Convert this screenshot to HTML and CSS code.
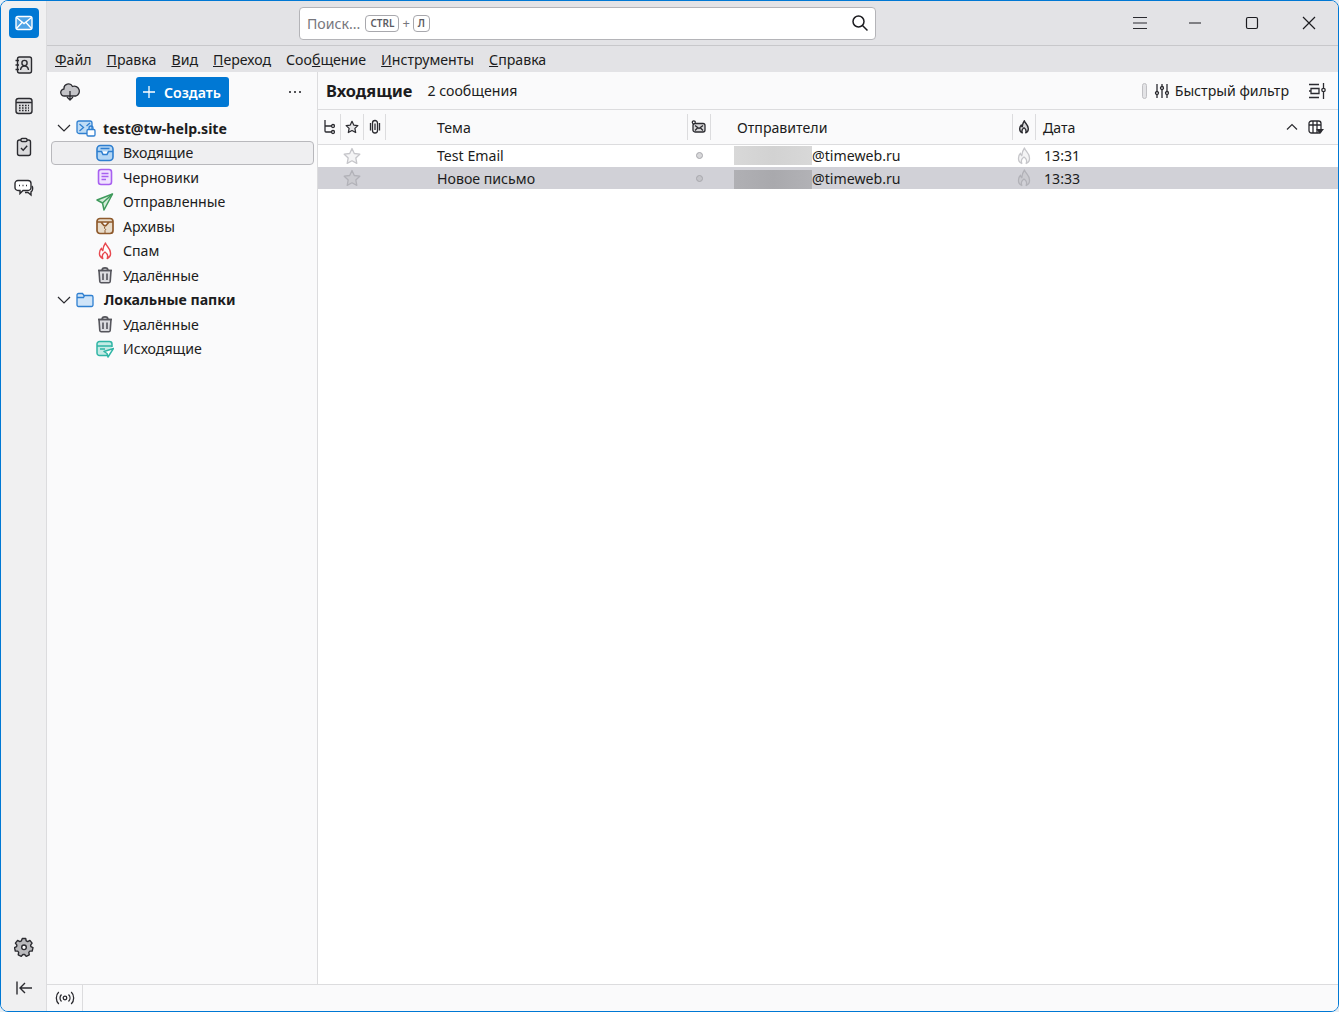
FILE: index.html
```html
<!DOCTYPE html>
<html lang="ru">
<head>
  <meta charset="UTF-8" />
  <title>Входящие - test@tw-help.site</title>
  <link rel="stylesheet" href="styles.css">
</head>
<body>
  <div class="window">

    <!-- Spaces toolbar -->
    <div class="spaces">
      <div class="space-btn space-active">
        <svg width="20" height="20" viewBox="0 0 20 20" fill="none" stroke="#fff" stroke-width="1.4"><rect x="2" y="3.500" width="16" height="13" rx="2" fill="#4da3e6"/><path d="M2.500 4.500 10 10.500l7.500-6M2.500 15.500 8 9.500M17.500 15.500 12 9.500"/></svg>
      </div>
      <div class="space-btn">
        <svg width="20" height="20" viewBox="0 0 20 20" fill="#dcdcde" stroke="#2b2b30" stroke-width="1.4"><rect x="3.500" y="2" width="14" height="16" rx="2"/><circle cx="10.500" cy="8" r="2.600" fill="none"/><path d="M6.500 15c.4-3 2-4 4-4s3.600 1 4 4" fill="none"/><path d="M1.500 5.500h3.500M1.500 10h3.500M1.500 14.500h3.500"/></svg>
      </div>
      <div class="space-btn">
        <svg width="20" height="20" viewBox="0 0 20 20" fill="#dcdcde" stroke="#2b2b30" stroke-width="1.4"><rect x="2" y="2.500" width="16" height="15" rx="2.500"/><path d="M2 6.500h16" /><path d="M5 9.500h10M5 12h10M5 14.500h10" stroke-dasharray="1.600 1.400" stroke-width="1.500"/></svg>
      </div>
      <div class="space-btn">
        <svg width="20" height="20" viewBox="0 0 20 20" fill="#dcdcde" stroke="#2b2b30" stroke-width="1.4"><rect x="3.500" y="3" width="13" height="15.500" rx="2"/><rect x="7" y="1.500" width="6" height="3" rx="1" fill="#fff"/><path d="m7 11 2.200 2.200L13.200 8.800" fill="none"/></svg>
      </div>
      <div class="space-btn">
        <svg width="20" height="20" viewBox="0 0 20 20" fill="#dcdcde" stroke="#2b2b30" stroke-width="1.4"><path d="M4 2.500h10a3 3 0 0 1 3 3v4a3 3 0 0 1-3 3H9l-3 3v-3H4a3 3 0 0 1-3-3v-4a3 3 0 0 1 3-3z" fill="#fff"/><path d="M18 8c1 1 1 5-1 6v3l-3-2.500h-3" fill="none"/><path d="M5 7.500h1M8.500 7.500h1M12 7.500h1" stroke-width="1.500"/></svg>
      </div>
      <div class="spaces-spacer"></div>
      <div class="space-btn">
        <svg width="20" height="20" viewBox="0 0 20 20" fill="#b9b9bc" stroke="#2b2b30" stroke-width="1.4" stroke-linejoin="round"><path d="M8.300 1.500h3.400l.5 2.400 1.500.7 2.200-1.200 2.200 2.700-1.500 2 .3 1.600 2.100 1-.8 3.300-2.400.1-1 1.300.5 2.400-3.100 1.500-1.600-1.800h-1.700l-1.600 1.800-3.100-1.500.5-2.400-1-1.300-2.400-.1-.8-3.300 2.100-1 .3-1.600-1.500-2 2.200-2.700 2.200 1.200 1.500-.7z"/><circle cx="10" cy="10.300" r="2.300" fill="#fff"/></svg>
      </div>
      <div class="space-btn collapse-btn">
        <svg width="20" height="20" viewBox="0 0 20 20" fill="none" stroke="#2b2b30" stroke-width="1.4"><path d="M3 3.500v13M18 10H6M11 5l-5 5 5 5"/></svg>
      </div>
    </div>

    <div class="main">

      <!-- Title bar -->
      <div class="titlebar">
        <div class="search">
          <span class="search-hint">Поиск...</span>
          <span class="kbd">CTRL</span>
          <span class="kbd-plus">+</span>
          <span class="kbd">Л</span>
          <svg class="search-icon" width="18" height="18" viewBox="0 0 18 18" fill="none" stroke="#1c1c20" stroke-width="1.500"><circle cx="7.500" cy="7.500" r="5.500"/><path d="m11.500 11.500 5 5"/></svg>
        </div>
        <div class="win-controls">
          <svg class="hamburger" width="16" height="16" viewBox="0 0 16 16" fill="none" stroke="#2b2b30" stroke-width="1.200"><path d="M1 2.500h14M1 8h14M1 13.500h14"/></svg>
          <svg width="14" height="14" viewBox="0 0 14 14" fill="none" stroke="#1c1c20" stroke-width="1.200"><path d="M1 7h12"/></svg>
          <svg width="14" height="14" viewBox="0 0 14 14" fill="none" stroke="#1c1c20" stroke-width="1.200"><rect x="1.500" y="1.500" width="11" height="11" rx="1.500"/></svg>
          <svg width="14" height="14" viewBox="0 0 14 14" fill="none" stroke="#1c1c20" stroke-width="1.200"><path d="m1 1 12 12M13 1 1 13"/></svg>
        </div>
      </div>

      <!-- Menu -->
      <div class="menubar">
        <span><u>Ф</u>айл</span>
        <span><u>П</u>равка</span>
        <span><u>В</u>ид</span>
        <span><u>П</u>ереход</span>
        <span>Соо<u>б</u>щение</span>
        <span><u>И</u>нструменты</span>
        <span><u>С</u>правка</span>
      </div>

      <div class="content">

        <!-- Folder pane -->
        <div class="folders">
          <div class="folders-head">
            <svg class="fetch-icon" width="20" height="20" viewBox="0 0 20 20" fill="#c4c4c8" stroke="#2b2b30" stroke-width="1.300" stroke-linejoin="round"><path d="M6.500 14H4.500a3.500 3.500 0 0 1-.5-7A4.500 4.500 0 0 1 12.500 4.500 4 4 0 0 1 16 14h-2.500z"/><path d="M10 9v9M7 15l3 3 3-3" fill="none"/></svg>
            <button class="create-btn">
              <svg width="12" height="12" viewBox="0 0 12 12" fill="none" stroke="#fff" stroke-width="1.300"><path d="M6 0v12M0 6h12"/></svg>
              <span>Создать</span>
            </button>
            <svg class="more-icon" width="14" height="4" viewBox="0 0 14 4" fill="#2b2b30"><circle cx="2" cy="2" r="1.100"/><circle cx="7" cy="2" r="1.100"/><circle cx="12" cy="2" r="1.100"/></svg>
          </div>

          <div class="tree">
            <div class="tree-row account">
              <svg class="chevron" width="14" height="14" viewBox="0 0 14 14" fill="none" stroke="#2b2b30" stroke-width="1.200"><path d="m1 4 6 6 6-6"/></svg>
              <svg class="acc-icon" width="20" height="20" viewBox="0 0 20 20" fill="#bfdcf5" stroke="#2f7fd0" stroke-width="1.300"><rect x="1" y="3" width="15" height="12.500" rx="2"/><path d="m3.500 6 4 3.500-4 3.500M14 5l-3.500 3" fill="none"/><rect x="11" y="11.500" width="8" height="6.500" rx="1.200" fill="#fff"/><path d="M13 11.500V10a2 2 0 0 1 4 0v1.500" fill="none"/></svg>
              <span>test@tw-help.site</span>
            </div>

            <div class="tree-row folder selected">
              <svg width="18" height="18" viewBox="0 0 18 18" fill="#b4d6f4" stroke="#2f7fd0" stroke-width="1.600"><rect x="1" y="1.500" width="16" height="15" rx="3.500"/><path d="M1 7.500h4.500l1.500 3h4l1.500-3H17" fill="#fff"/><path d="M4.500 4.500h9" /></svg>
              <span>Входящие</span>
            </div>
            <div class="tree-row folder">
              <svg width="18" height="18" viewBox="0 0 18 18" fill="#f0e2ff" stroke="#a860f0" stroke-width="1.600"><rect x="2.500" y="1.500" width="13" height="15" rx="2.500"/><path d="M5.500 5.500h7M5.500 8.500h7M5.500 11.500h4.500" fill="none"/></svg>
              <span>Черновики</span>
            </div>
            <div class="tree-row folder">
              <svg width="18" height="18" viewBox="0 0 18 18" fill="#d4ecd9" stroke="#3f9a5c" stroke-width="1.500" stroke-linejoin="round"><path d="M16.500 1 1 7l5.500 3 1.500 7z"/><path d="M16.500 1 6.500 10" fill="none"/></svg>
              <span>Отправленные</span>
            </div>
            <div class="tree-row folder">
              <svg width="18" height="18" viewBox="0 0 18 18" fill="#e8dccb" stroke="#8f5a2c" stroke-width="1.700"><rect x="1" y="1.500" width="16" height="15" rx="3"/><path d="M1 5h16M5 5l3 3.500h2L13 5" fill="#fff"/><path d="M9 8.500v1.500l-.8 1 1.600 1.500-.8 1v2.500" fill="none" stroke-width="1"/></svg>
              <span>Архивы</span>
            </div>
            <div class="tree-row folder">
              <svg width="18" height="18" viewBox="0 0 18 18" fill="#fff" stroke="#e8484f" stroke-width="1.400" stroke-linejoin="round"><path d="M9.500 1c.5 3 5 5 5 10a5.500 5.500 0 0 1-3.300 5.500c1-2.500 0-5-2.200-6.500-2.200 1.500-3.200 4-2.200 6.500A5.500 5.500 0 0 1 3.500 11c0-2 .8-3.500 2-4.700 0 1 .5 2 1.300 2.400C7 6 8 3 9.500 1z"/></svg>
              <span>Спам</span>
            </div>
            <div class="tree-row folder">
              <svg width="18" height="18" viewBox="0 0 18 18" fill="#dcdce0" stroke="#55555c" stroke-width="1.600"><path d="M3 4.500h12l-.8 11a1.500 1.500 0 0 1-1.500 1.300H5.300a1.500 1.500 0 0 1-1.500-1.300z"/><path d="M2 4.500h14M6 4.500c0-3.500 6-3.500 6 0M7 7.500v6.500M11 7.500v6.500" fill="none"/></svg>
              <span>Удалённые</span>
            </div>

            <div class="tree-row account local">
              <svg class="chevron" width="14" height="14" viewBox="0 0 14 14" fill="none" stroke="#2b2b30" stroke-width="1.200"><path d="m1 4 6 6 6-6"/></svg>
              <svg class="acc-icon" width="18" height="18" viewBox="0 0 18 18" fill="#cfe4f8" stroke="#2f7fd0" stroke-width="1.300"><path d="M1 4a1.500 1.500 0 0 1 1.500-1.500h4L8 4.500h7.500A1.500 1.500 0 0 1 17 6v8a1.500 1.500 0 0 1-1.500 1.500h-13A1.500 1.500 0 0 1 1 14z"/><path d="M1 6.500h6.500L8.500 4.500" fill="none"/></svg>
              <span>Локальные папки</span>
            </div>

            <div class="tree-row folder">
              <svg width="18" height="18" viewBox="0 0 18 18" fill="#dcdce0" stroke="#55555c" stroke-width="1.600"><path d="M3 4.500h12l-.8 11a1.500 1.500 0 0 1-1.500 1.300H5.300a1.500 1.500 0 0 1-1.500-1.300z"/><path d="M2 4.500h14M6 4.500c0-3.500 6-3.500 6 0M7 7.500v6.500M11 7.500v6.500" fill="none"/></svg>
              <span>Удалённые</span>
            </div>
            <div class="tree-row folder">
              <svg width="18" height="18" viewBox="0 0 18 18" fill="#c4ebe5" stroke="#2fb5a5" stroke-width="1.500" stroke-linejoin="round"><path d="M11 15.500H3.500A2.500 2.500 0 0 1 1 13V4a2.500 2.500 0 0 1 2.500-2.500h10A2.500 2.500 0 0 1 16 4v3"/><path d="M1 6h15M4 9h5" fill="none"/><path d="M17.500 8.500 8 11.500l3 2 1 3.500z" fill="#fff"/></svg>
              <span>Исходящие</span>
            </div>
          </div>
        </div>

        <!-- Thread pane -->
        <div class="threads">
          <div class="threads-head">
            <span class="threads-title">Входящие</span>
            <span class="threads-count">2 сообщения</span>
            <span class="toggle-off"></span>
            <svg class="filter-icon" width="16" height="16" viewBox="0 0 16 16" fill="none" stroke="#2b2b30" stroke-width="1.300"><path d="M3 1v7M3 12v3M8 1v2M8 7v8M13 1v7M13 12v3"/><circle cx="3" cy="10" r="1.500"/><circle cx="8" cy="5" r="1.500"/><circle cx="13" cy="10" r="1.500"/></svg>
            <span class="filter-label">Быстрый фильтр</span>
            <svg class="layout-icon" width="18" height="18" viewBox="0 0 18 18" fill="none" stroke="#2b2b30" stroke-width="1.300"><path d="M1 2.500h10M1 15.500h10M3 6.500h8v5H3zM1 9h2M15.500 1v5M15.500 10v7"/><circle cx="15.500" cy="8" r="1.700"/></svg>
          </div>

          <div class="col-head thread-grid">
            <div class="col col-icon">
              <svg width="14" height="16" viewBox="0 0 14 16" fill="none" stroke="#2b2b30" stroke-width="1.300"><path d="M3 1v11a1 1 0 0 0 1 1h5M3 7h6"/><circle cx="11" cy="7" r="1.500"/><circle cx="11" cy="13" r="1.500"/></svg>
            </div>
            <div class="col col-icon">
              <svg width="14" height="14" viewBox="0 0 16 16" fill="#e6e6e8" stroke="#2b2b30" stroke-width="1.400" stroke-linejoin="round"><path d="m8 1.500 2 4.300 4.700.6-3.400 3.200.9 4.700L8 12l-4.200 2.300.9-4.700L1.300 6.400 6 5.800z"/></svg>
            </div>
            <div class="col col-icon">
              <svg width="12" height="16" viewBox="0 0 12 16" fill="none" stroke="#2b2b30" stroke-width="1.300"><path d="M3.500 4v7.500a2.500 2.500 0 0 0 5 0V4a2.500 2.500 0 0 0-5 0M6 4.500v6.500M10.500 4v7.500M1.500 4v7.500"/></svg>
            </div>
            <div class="col col-subject">Тема</div>
            <div class="col col-icon">
              <svg width="16" height="14" viewBox="0 0 16 14" fill="#d8d8da" stroke="#2b2b30" stroke-width="1.300"><rect x="2" y="3.500" width="12" height="8.500" rx="2"/><path d="m4 5.500 4 3 4-3M4 10.500l2.500-2.500M12 10.500 9.500 8" fill="none"/><circle cx="2.800" cy="2.300" r="1.500" fill="#fff"/></svg>
            </div>
            <div class="col col-sender">Отправители</div>
            <div class="col col-icon">
              <svg width="14" height="14" viewBox="0 0 18 18" fill="#d8d8da" stroke="#2b2b30" stroke-width="1.800" stroke-linejoin="round"><path d="M9.500 1c.5 3 5 5 5 10a5.500 5.500 0 0 1-3.300 5.500c1-2.500 0-5-2.200-6.500-2.200 1.500-3.200 4-2.200 6.500A5.500 5.500 0 0 1 3.500 11c0-2 .8-3.500 2-4.700 0 1 .5 2 1.300 2.400C7 6 8 3 9.500 1z"/></svg>
            </div>
            <div class="col col-date">
              <span>Дата</span>
              <svg class="sort-icon" width="12" height="8" viewBox="0 0 12 8" fill="none" stroke="#2b2b30" stroke-width="1.200"><path d="m1 6.500 5-5 5 5"/></svg>
              <svg class="picker-icon" width="16" height="15" viewBox="0 0 16 15" fill="#fff" stroke="#2b2b30" stroke-width="1.300"><rect x="1" y="1" width="12" height="12" rx="2.500"/><path d="M1 5h12M5 1v12M9 1v12" fill="none"/><path d="M8 9h8l-4 5z" fill="#2b2b30" stroke="none"/></svg>
            </div>
          </div>

          <div class="thread-row thread-grid first-row">
            <div></div>
            <div class="cell-icon">
              <svg width="18" height="18" viewBox="0 0 18 18" fill="#f4f4f5" stroke="#c6c6ca" stroke-width="1.300" stroke-linejoin="round"><path d="m9 1.500 2.300 5 5.500.7-4 3.700 1 5.500L9 13.800l-4.800 2.600 1-5.500-4-3.700 5.500-.7z"/></svg>
            </div>
            <div></div>
            <div class="cell-subject">Test Email</div>
            <div class="cell-icon"><span class="status-dot"></span></div>
            <div class="cell-sender"><span class="redacted"></span>@timeweb.ru</div>
            <div class="cell-icon">
              <svg width="18" height="18" viewBox="0 0 18 18" fill="#f4f4f5" stroke="#c6c6ca" stroke-width="1.300" stroke-linejoin="round"><path d="M9.500 1c.5 3 5 5 5 10a5.500 5.500 0 0 1-3.300 5.500c1-2.500 0-5-2.200-6.500-2.200 1.500-3.200 4-2.200 6.500A5.500 5.500 0 0 1 3.500 11c0-2 .8-3.500 2-4.700 0 1 .5 2 1.300 2.400C7 6 8 3 9.500 1z"/></svg>
            </div>
            <div class="cell-date">13:31</div>
          </div>
          <div class="thread-row thread-grid thread-selected">
            <div></div>
            <div class="cell-icon">
              <svg width="18" height="18" viewBox="0 0 18 18" fill="#cbcbd0" stroke="#b2b2b8" stroke-width="1.300" stroke-linejoin="round"><path d="m9 1.500 2.300 5 5.500.7-4 3.700 1 5.500L9 13.800l-4.800 2.600 1-5.500-4-3.700 5.500-.7z"/></svg>
            </div>
            <div></div>
            <div class="cell-subject">Новое письмо</div>
            <div class="cell-icon"><span class="status-dot"></span></div>
            <div class="cell-sender"><span class="redacted"></span>@timeweb.ru</div>
            <div class="cell-icon">
              <svg width="18" height="18" viewBox="0 0 18 18" fill="#cbcbd0" stroke="#b2b2b8" stroke-width="1.300" stroke-linejoin="round"><path d="M9.500 1c.5 3 5 5 5 10a5.500 5.500 0 0 1-3.300 5.500c1-2.500 0-5-2.200-6.500-2.200 1.500-3.200 4-2.200 6.500A5.500 5.500 0 0 1 3.500 11c0-2 .8-3.500 2-4.700 0 1 .5 2 1.300 2.400C7 6 8 3 9.500 1z"/></svg>
            </div>
            <div class="cell-date">13:33</div>
          </div>
        </div>
      </div>

      <!-- Status bar -->
      <div class="statusbar">
        <div class="status-online">
          <svg width="20" height="14" viewBox="0 0 20 14" fill="none" stroke="#2b2b30" stroke-width="1.300"><circle cx="10" cy="7" r="1.800"/><path d="M6.500 3.500c-2 2-2 5 0 7M13.500 3.500c2 2 2 5 0 7M3.800 1C.5 4 .5 10 3.800 13M16.200 1c3.300 3 3.300 9 0 12"/></svg>
        </div>
      </div>
    </div>
  </div>
</body>
</html>
```

FILE: styles.css
```css
* { margin: 0; padding: 0; box-sizing: border-box; }
html, body {
  height: 100%;
  background: #e8eef4;
  color: #1c1c20;
  font-family: "Noto Sans", sans-serif;
  font-size: 14.15px;
  overflow: hidden;
}

.window {
  display: flex;
  height: 100%;
  border: 1px solid #0078d4;
  border-radius: 8px;
  overflow: hidden;
  background: #fff;
}

/* левая панель */
.spaces {
  display: flex;
  flex-direction: column;
  align-items: center;
  width: 46px;
  flex-shrink: 0;
  padding-top: 7px;
  gap: 11px;
  background: #f0f0f1;
  border-right: 1px solid #dcdcde;
}
.space-btn {
  display: flex;
  justify-content: center;
  align-items: center;
  width: 30px;
  height: 30px;
  border-radius: 4px;
}
.space-active { background: #0078d4; margin-bottom: 0.5px; }
.spaces-spacer { flex: 1; }
.collapse-btn { margin-bottom: 8px; }

.main {
  display: flex;
  flex-direction: column;
  flex: 1;
  min-width: 0;
}

.titlebar {
  display: flex;
  align-items: center;
  height: 45px;
  flex-shrink: 0;
  padding-left: 252px;
  background: #e3e3e6;
  border-bottom: 1px solid #c8c8cb;
}
.search {
  display: flex;
  align-items: center;
  width: 577px;
  height: 33px;
  padding: 0 6px 0 7px;
  background: #fff;
  border: 1px solid #b4b4b8;
  border-radius: 4px;
}
.search-hint { color: #77777d; margin-right: 5px; }
.kbd {
  padding: 0 4px;
  min-width: 15px;
  height: 17px;
  line-height: 15px;
  text-align: center;
  font-size: 10px;
  font-weight: 600;
  color: #5b5b62;
  border: 1px solid #a8a8ad;
  border-radius: 4px;
}
.kbd-plus { margin: 0 3px; color: #77777d; font-size: 13px; }
.search-icon { margin-left: auto; }
.win-controls {
  display: flex;
  align-items: center;
  margin-left: auto;
  margin-right: 22px;
  gap: 43px;
}
.hamburger { margin-right: -3px; }

.menubar {
  display: flex;
  align-items: center;
  height: 26px;
  flex-shrink: 0;
  padding-left: 8px;
  gap: 15px;
  background: #e3e3e6;
}

.content {
  display: flex;
  flex: 1;
  min-height: 0;
}

/* папки */
.folders {
  width: 271px;
  flex-shrink: 0;
  background: #fafafb;
  border-right: 1px solid #dcdcde;
}
.folders-head {
  display: flex;
  align-items: center;
  height: 44px;
  padding: 0 0 4px 13px;
}
.create-btn {
  display: flex;
  align-items: center;
  gap: 9px;
  width: 93px;
  height: 30px;
  margin-left: 56px;
  padding-left: 7px;
  border: none;
  border-radius: 3px;
  background: #0078d4;
  color: #fff;
  font-family: inherit;
  font-size: 14.15px;
  font-weight: 600;
}
.more-icon { margin-left: 59px; }

.tree { padding: 0 3px 0 4px; }
.tree-row {
  display: flex;
  align-items: center;
  height: 24.5px;
  white-space: nowrap;
}
.tree-row.account { padding-left: 6px; font-weight: 700; }
.tree-row.account .chevron { margin-right: 5px; }
.tree-row.account .acc-icon { margin-right: 7px; }
.tree-row.local .acc-icon { margin-right: 10px; }
.tree-row.folder { padding-left: 45px; }
.tree-row.folder svg { margin-right: 9px; }
.tree-row.selected {
  background: #efeff1;
  border: 1px solid #b8b8bc;
  border-radius: 4px;
  padding-left: 44px;
}

/* письма */
.threads {
  display: flex;
  flex-direction: column;
  flex: 1;
  min-width: 0;
  background: #fff;
}
.threads-head {
  display: flex;
  align-items: center;
  height: 38px;
  padding: 0 12px 0 8px;
  background: #fafafb;
  border-bottom: 1px solid #dcdcde;
}
.threads-title { font-size: 16.4px; font-weight: 700; margin-right: 15px; }
.toggle-off {
  width: 5px;
  height: 16px;
  margin-left: auto;
  margin-right: 7px;
  background: #e3e3e6;
  border: 1px solid #c0c0c4;
  border-radius: 3px;
}
.filter-label { margin: 0 19px 0 5px; }

.thread-grid {
  display: grid;
  grid-template-columns: 23px 23px 22px 302px 23px 302px 23px 1fr;
  align-items: center;
}
.col-head {
  height: 35px;
  background: #fafafb;
  border-bottom: 1px solid #dcdcde;
}
.col {
  display: flex;
  align-items: center;
  height: 26px;
  border-right: 1px solid #dcdcde;
}
.col-icon { justify-content: center; }
.col-subject { padding-left: 51px; }
.col-sender { padding-left: 26px; }
.col-date { padding: 0 14px 0 7px; border-right: none; }
.sort-icon { margin-left: auto; margin-right: 10px; }

.thread-row { height: 22px; }
.first-row { padding-bottom: 1px; }
.thread-row.thread-selected { background: #d1d1d7; }
.cell-icon { display: flex; justify-content: center; align-items: center; }
.cell-icon svg { margin-right: 1px; }
.cell-subject { padding-left: 51px; }
.cell-date { padding-left: 8px; }
.cell-sender { display: flex; align-items: center; height: 100%; padding-left: 23px; }
.status-dot {
  width: 7px;
  height: 7px;
  border-radius: 50%;
  background: #d8d8da;
  border: 1px solid #a8a8ad;
}
.thread-selected .status-dot { background: #c4c4c9; }
.redacted {
  width: 78px;
  height: 19px;
  background: linear-gradient(90deg, #d8d8d8, #d2d2d2 50%, #d8d8d8);
}
.thread-selected .redacted {
  align-self: flex-end;
  background: linear-gradient(90deg, #b0b0b4, #a9a9ad 50%, #b2b2b6);
}

.statusbar {
  height: 27px;
  flex-shrink: 0;
  background: #fafafb;
  border-top: 1px solid #dcdcde;
}
.status-online {
  display: flex;
  justify-content: center;
  align-items: center;
  width: 36px;
  height: 100%;
  border-right: 1px solid #dcdcde;
}
```
